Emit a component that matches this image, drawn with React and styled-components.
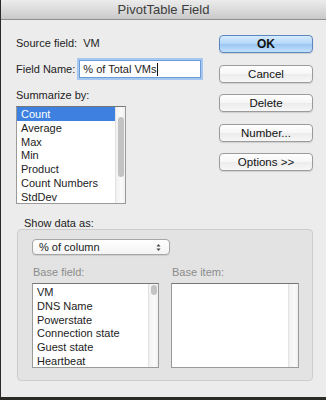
import React from "react";
import styled, { createGlobalStyle } from "styled-components";

const GlobalStyle = createGlobalStyle`
  html, body {
    margin: 0;
    padding: 0;
    background: #2b2a26;
  }
  body {
    font-family: "Lucida Grande", "Liberation Sans", Arial, sans-serif;
    font-size: 11px;
    color: #1c1c1c;
  }
`;

const Desktop = styled.div`
  width: 326px;
  height: 400px;
  display: flex;
  flex-direction: column;
  background: #2b2a26;
  overflow: hidden;
`;

const Window = styled.div`
  height: 397px;
  margin-left: 1px;
  background: #ececec;
  display: flex;
  flex-direction: column;
`;

const TitleBar = styled.div`
  height: 19px;
  flex: none;
  background: linear-gradient(#ececec, #d8d8d8 60%, #c8c8c8);
  border-bottom: 1px solid #8e8e8e;
  display: flex;
  align-items: center;
  justify-content: center;
  font-size: 13px;
  color: #3c3c3c;
`;

const Body = styled.div`
  display: flex;
  flex-direction: column;
  padding: 0 14px 0 15px;
`;

const TopArea = styled.div`
  display: flex;
  justify-content: space-between;
`;

const LeftCol = styled.div`
  display: flex;
  flex-direction: column;
  padding-top: 16px;
`;

const Line = styled.div`
  line-height: 14px;
  height: 14px;
  white-space: nowrap;
`;

const FieldRow = styled.div`
  display: flex;
  align-items: center;
  gap: 4px;
  margin-top: 10px;
`;

const TextInput = styled.div`
  width: 117px;
  height: 16px;
  background: #fff;
  border: 1px solid #6d9bd4;
  box-shadow: 0 0 0 2px #a6c8f0;
  display: flex;
  align-items: center;
  padding-left: 3px;
  white-space: nowrap;
`;

const Caret = styled.span`
  display: inline-block;
  width: 1px;
  height: 13px;
  background: #111;
  margin-left: 1px;
`;

const Heading = styled(Line)`
  margin-top: 10px;
`;

const ListBox = styled.div`
  width: ${(p) => p.$w}px;
  height: ${(p) => p.$h}px;
  background: #fff;
  border: 1px solid #9a9a9a;
  border-top-color: #777;
  display: flex;
  overflow: hidden;
  box-sizing: border-box;
  margin-top: ${(p) => p.$mt || 0}px;
`;

const Rows = styled.div`
  flex: 1;
  display: flex;
  flex-direction: column;
  overflow: hidden;
  padding-top: ${(p) => p.$pt || 0}px;
`;

const Row = styled.div`
  height: 13.8px;
  line-height: 14px;
  padding-left: 4px;
  flex: none;
  white-space: nowrap;
  background: ${(p) => (p.$selected ? "#3d80df" : "transparent")};
  color: ${(p) => (p.$selected ? "#fff" : "#1c1c1c")};
`;

const Track = styled.div`
  width: 10px;
  flex: none;
  background: linear-gradient(90deg, #f1f1f1, #fafafa 60%, #f0f0f0);
  border-left: 1px solid #e2e2e2;
  padding: ${(p) => p.$pt}px 0 0 2px;
  box-sizing: border-box;
`;

const Thumb = styled.div`
  width: 6px;
  height: ${(p) => p.$h}px;
  border-radius: 3px;
  background: #c3c3c3;
`;

const ButtonCol = styled.div`
  display: flex;
  flex-direction: column;
  gap: 11.5px;
  padding-top: 15px;
  margin-right: -1px;
`;

const Button = styled.div`
  width: 92px;
  height: 16px;
  border-radius: 4px;
  border: 1px solid ${(p) => (p.$primary ? "#5d86bd" : "#9b9b9b")};
  background: ${(p) =>
    p.$primary
      ? "linear-gradient(#d6ebfd, #b2d6f8 50%, #99c6f3 52%, #c4e2fc)"
      : "linear-gradient(#ffffff, #f6f6f6 50%, #ececec 52%, #f7f7f7)"};
  box-shadow: 0 1px 1px rgba(0, 0, 0, 0.12);
  display: flex;
  align-items: center;
  justify-content: center;
  font-size: ${(p) => (p.$primary ? 12 : 11.5)}px;
  font-weight: ${(p) => (p.$primary ? 700 : 400)};
  color: #111;
`;

const ShowLabel = styled(Line)`
  margin-top: 12px;
  height: 13px;
  padding-left: 8px;
`;

const GroupBox = styled.div`
  margin-left: 1px;
  width: 296px;
  height: 152px;
  box-sizing: border-box;
  background: #e3e3e3;
  border: 1px solid #cdcdcd;
  border-radius: 4px;
  padding: 9px 14px 0 14px;
  display: flex;
  flex-direction: column;
`;

const Popup = styled.div`
  width: 122px;
  height: 14px;
  border: 1px solid #a6a6a6;
  border-radius: 4px;
  background: linear-gradient(#ffffff, #f3f3f3);
  box-shadow: 0 1px 1px rgba(0, 0, 0, 0.1);
  display: flex;
  align-items: center;
  justify-content: space-between;
  padding: 0 8px 0 6px;
`;

const Arrows = styled.svg`
  width: 5px;
  height: 9px;
`;

const Columns = styled.div`
  display: flex;
  gap: 12px;
  margin-top: 10px;
`;

const Column = styled.div`
  display: flex;
  flex-direction: column;
`;

const Dim = styled(Line)`
  color: #8c8c8c;
  padding-left: 1px;
`;

const summarize = [
  "Count",
  "Average",
  "Max",
  "Min",
  "Product",
  "Count Numbers",
  "StdDev",
];

const baseFields = [
  "VM",
  "DNS Name",
  "Powerstate",
  "Connection state",
  "Guest state",
  "Heartbeat",
];

const App = () => {
  return (
    <Desktop>
      <GlobalStyle />
      <Window>
        <TitleBar>PivotTable Field</TitleBar>
        <Body>
          <TopArea>
            <LeftCol>
              <Line>Source field:&nbsp;&nbsp;VM</Line>
              <FieldRow>
                <span>Field Name:</span>
                <TextInput>
                  % of Total VMs
                  <Caret />
                </TextInput>
              </FieldRow>
              <Heading>Summarize by:</Heading>
              <ListBox $w={110} $h={98} $mt={4}>
                <Rows>
                  {summarize.map((s, i) => (
                    <Row key={s} $selected={i === 0}>
                      {s}
                    </Row>
                  ))}
                </Rows>
                <Track $pt={10}>
                  <Thumb $h={60} />
                </Track>
              </ListBox>
            </LeftCol>
            <ButtonCol>
              <Button $primary>OK</Button>
              <Button>Cancel</Button>
              <Button>Delete</Button>
              <Button>Number...</Button>
              <Button>Options &gt;&gt;</Button>
            </ButtonCol>
          </TopArea>
          <ShowLabel>Show data as:</ShowLabel>
          <GroupBox>
            <Popup>
              <span>% of column</span>
              <Arrows viewBox="0 0 5 9">
                <path d="M0.5 3.5 L2.5 1 L4.5 3.5 Z" fill="#444" />
                <path d="M0.5 5.5 L2.5 8 L4.5 5.5 Z" fill="#444" />
              </Arrows>
            </Popup>
            <Columns>
              <Column>
                <Dim>Base field:</Dim>
                <ListBox $w={127} $h={85} $mt={4}>
                  <Rows $pt={1}>
                    {baseFields.map((f) => (
                      <Row key={f}>{f}</Row>
                    ))}
                  </Rows>
                  <Track $pt={1}>
                    <Thumb $h={10} />
                  </Track>
                </ListBox>
              </Column>
              <Column>
                <Dim>Base item:</Dim>
                <ListBox $w={128} $h={85} $mt={4}>
                  <Rows />
                  <Track $pt={0} />
                </ListBox>
              </Column>
            </Columns>
          </GroupBox>
        </Body>
      </Window>
    </Desktop>
  );
};

export default App;
